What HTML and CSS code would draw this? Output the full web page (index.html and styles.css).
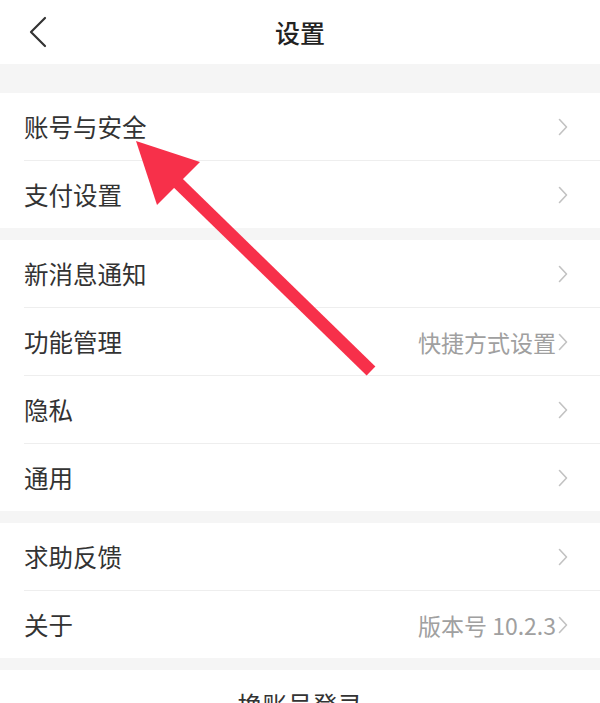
FILE: index.html
```html
<!DOCTYPE html>
<html lang="zh">
<head>
    <meta charset="UTF-8">
    <title>设置</title>
    <meta name="viewport" content="width=device-width, initial-scale=1.0">
    <link rel="stylesheet" href="styles.css">
</head>
<body>
<div class="page">
    <div class="header">
        <div class="back">
            <svg width="20" height="32" viewBox="0 0 20 32"><polyline points="17,2 3,16 17,30" fill="none" stroke="#333" stroke-width="2.2" stroke-linecap="round" stroke-linejoin="round"/></svg>
        </div>
        <div class="title">设置</div>
        <div></div>
    </div>

    <div class="gap first"></div>
    <div class="group">
        <div class="row"><span class="label">账号与安全</span><span class="more"><svg class="chev" viewBox="0 0 10 18"><polyline points="1.5,1.5 8.5,9 1.5,16.5"/></svg></span></div>
        <div class="row"><span class="label">支付设置</span><span class="more"><svg class="chev" viewBox="0 0 10 18"><polyline points="1.5,1.5 8.5,9 1.5,16.5"/></svg></span></div>
    </div>

    <div class="gap"></div>
    <div class="group">
        <div class="row"><span class="label">新消息通知</span><span class="more"><svg class="chev" viewBox="0 0 10 18"><polyline points="1.5,1.5 8.5,9 1.5,16.5"/></svg></span></div>
        <div class="row"><span class="label">功能管理</span><span class="more">快捷方式设置<svg class="chev" viewBox="0 0 10 18"><polyline points="1.5,1.5 8.5,9 1.5,16.5"/></svg></span></div>
        <div class="row"><span class="label">隐私</span><span class="more"><svg class="chev" viewBox="0 0 10 18"><polyline points="1.5,1.5 8.5,9 1.5,16.5"/></svg></span></div>
        <div class="row"><span class="label">通用</span><span class="more"><svg class="chev" viewBox="0 0 10 18"><polyline points="1.5,1.5 8.5,9 1.5,16.5"/></svg></span></div>
    </div>

    <div class="gap"></div>
    <div class="group">
        <div class="row"><span class="label">求助反馈</span><span class="more"><svg class="chev" viewBox="0 0 10 18"><polyline points="1.5,1.5 8.5,9 1.5,16.5"/></svg></span></div>
        <div class="row"><span class="label">关于</span><span class="more">版本号 10.2.3<svg class="chev" viewBox="0 0 10 18"><polyline points="1.5,1.5 8.5,9 1.5,16.5"/></svg></span></div>
    </div>

    <div class="gap"></div>
    <div class="switch">换账号登录</div>

    <!-- annotation arrow drawn over the list -->
    <svg class="pointer" width="600" height="703" viewBox="0 0 600 703">
        <line x1="371" y1="371" x2="176" y2="181" stroke="#f7304a" stroke-width="12.5"/>
        <polygon points="136,141 200,162 157,205" fill="#f7304a"/>
    </svg>
</div>
</body>
</html>
```

FILE: styles.css
```css
html, body {
    margin: 0;
    background: #f5f5f5;
    font-family: "Noto Sans CJK SC", "Noto Sans", sans-serif;
}
.page {
    position: relative;
    width: 600px;
    height: 703px;
    overflow: hidden;
}
.header {
    height: 64px;
    background: white;
    display: grid;
    grid-template-columns: 1fr auto 1fr;
    align-items: center;
}
.back {
    padding-left: 28px;
    display: flex;
    align-items: center;
}
.title {
    font-size: 25px;
    color: #222;
    font-weight: 500;
}
.gap {
    height: 12px;
}
.gap.first {
    height: 29px;
}
.group {
    background: white;
}
.row {
    height: 67px;
    margin-left: 24px;
    padding-right: 32px;
    display: flex;
    align-items: center;
    justify-content: space-between;
}
.row + .row {
    border-top: 1px solid #eeeeee;
}
.label {
    font-size: 24.5px;
    color: #333;
}
.more {
    display: flex;
    align-items: center;
    font-size: 23px;
    color: #a0a0a0;
}
.chev {
    width: 10px;
    height: 18px;
    margin-left: 2px;
    fill: none;
    stroke: #c2c2c2;
    stroke-width: 1.6;
    stroke-linecap: round;
    stroke-linejoin: round;
}
.switch {
    height: 68px;
    background: white;
    display: flex;
    align-items: center;
    justify-content: center;
    font-size: 25px;
    color: #333;
}
.pointer {
    position: absolute;
    left: 0;
    top: 0;
    pointer-events: none;
}
```
